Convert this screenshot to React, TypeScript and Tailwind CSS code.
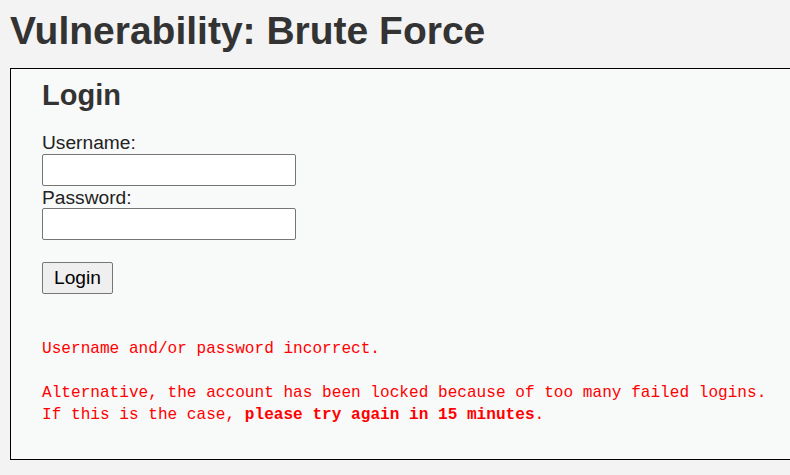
export default function App() {
  return (
    <div className="w-[790px] h-[475px] overflow-hidden bg-[#f3f3f3]" style={{ fontFamily: '"Liberation Sans", Arial, sans-serif' }}>
      <h1 className="pl-[10px] pt-[8px] h-[68px] text-[39px] font-bold text-[#333] leading-[46px]">Vulnerability: Brute Force</h1>
      <div className="ml-[10px] w-[900px] h-[392px] border border-black bg-[#f8f9f9] pl-[31px]">
        <h2 className="mt-[10px] h-[33px] text-[29px] font-bold text-[#333] leading-[33px]">Login</h2>
        <div className="mt-[21px] h-[20px] text-[19.2px] leading-[20px] text-[#222]">Username:</div>
        <input type="text" className="block mt-[1px] w-[254px] h-[32px] bg-white border border-[#767676] rounded-[2px]" />
        <div className="mt-[2px] h-[20px] text-[19.2px] leading-[20px] text-[#222]">Password:</div>
        <input type="password" className="block mt-0 w-[254px] h-[32px] bg-white border border-[#767676] rounded-[2px]" />
        <button className="block mt-[22px] w-[71px] h-[32px] bg-[#efefef] border border-[#767676] rounded-[2px] text-[19.2px] text-black leading-[30px]">Login</button>
        <div className="mt-[44px] text-[16.1px] leading-[22px] text-[#ff0000] whitespace-pre" style={{ fontFamily: '"Liberation Mono", "Courier New", monospace' }}>
          <div>Username and/or password incorrect.</div>
          <div className="mt-[22px]">Alternative, the account has been locked because of too many failed logins.</div>
          <div>If this is the case, <span className="font-bold">please try again in 15 minutes</span>.</div>
        </div>
      </div>
    </div>
  );
}
